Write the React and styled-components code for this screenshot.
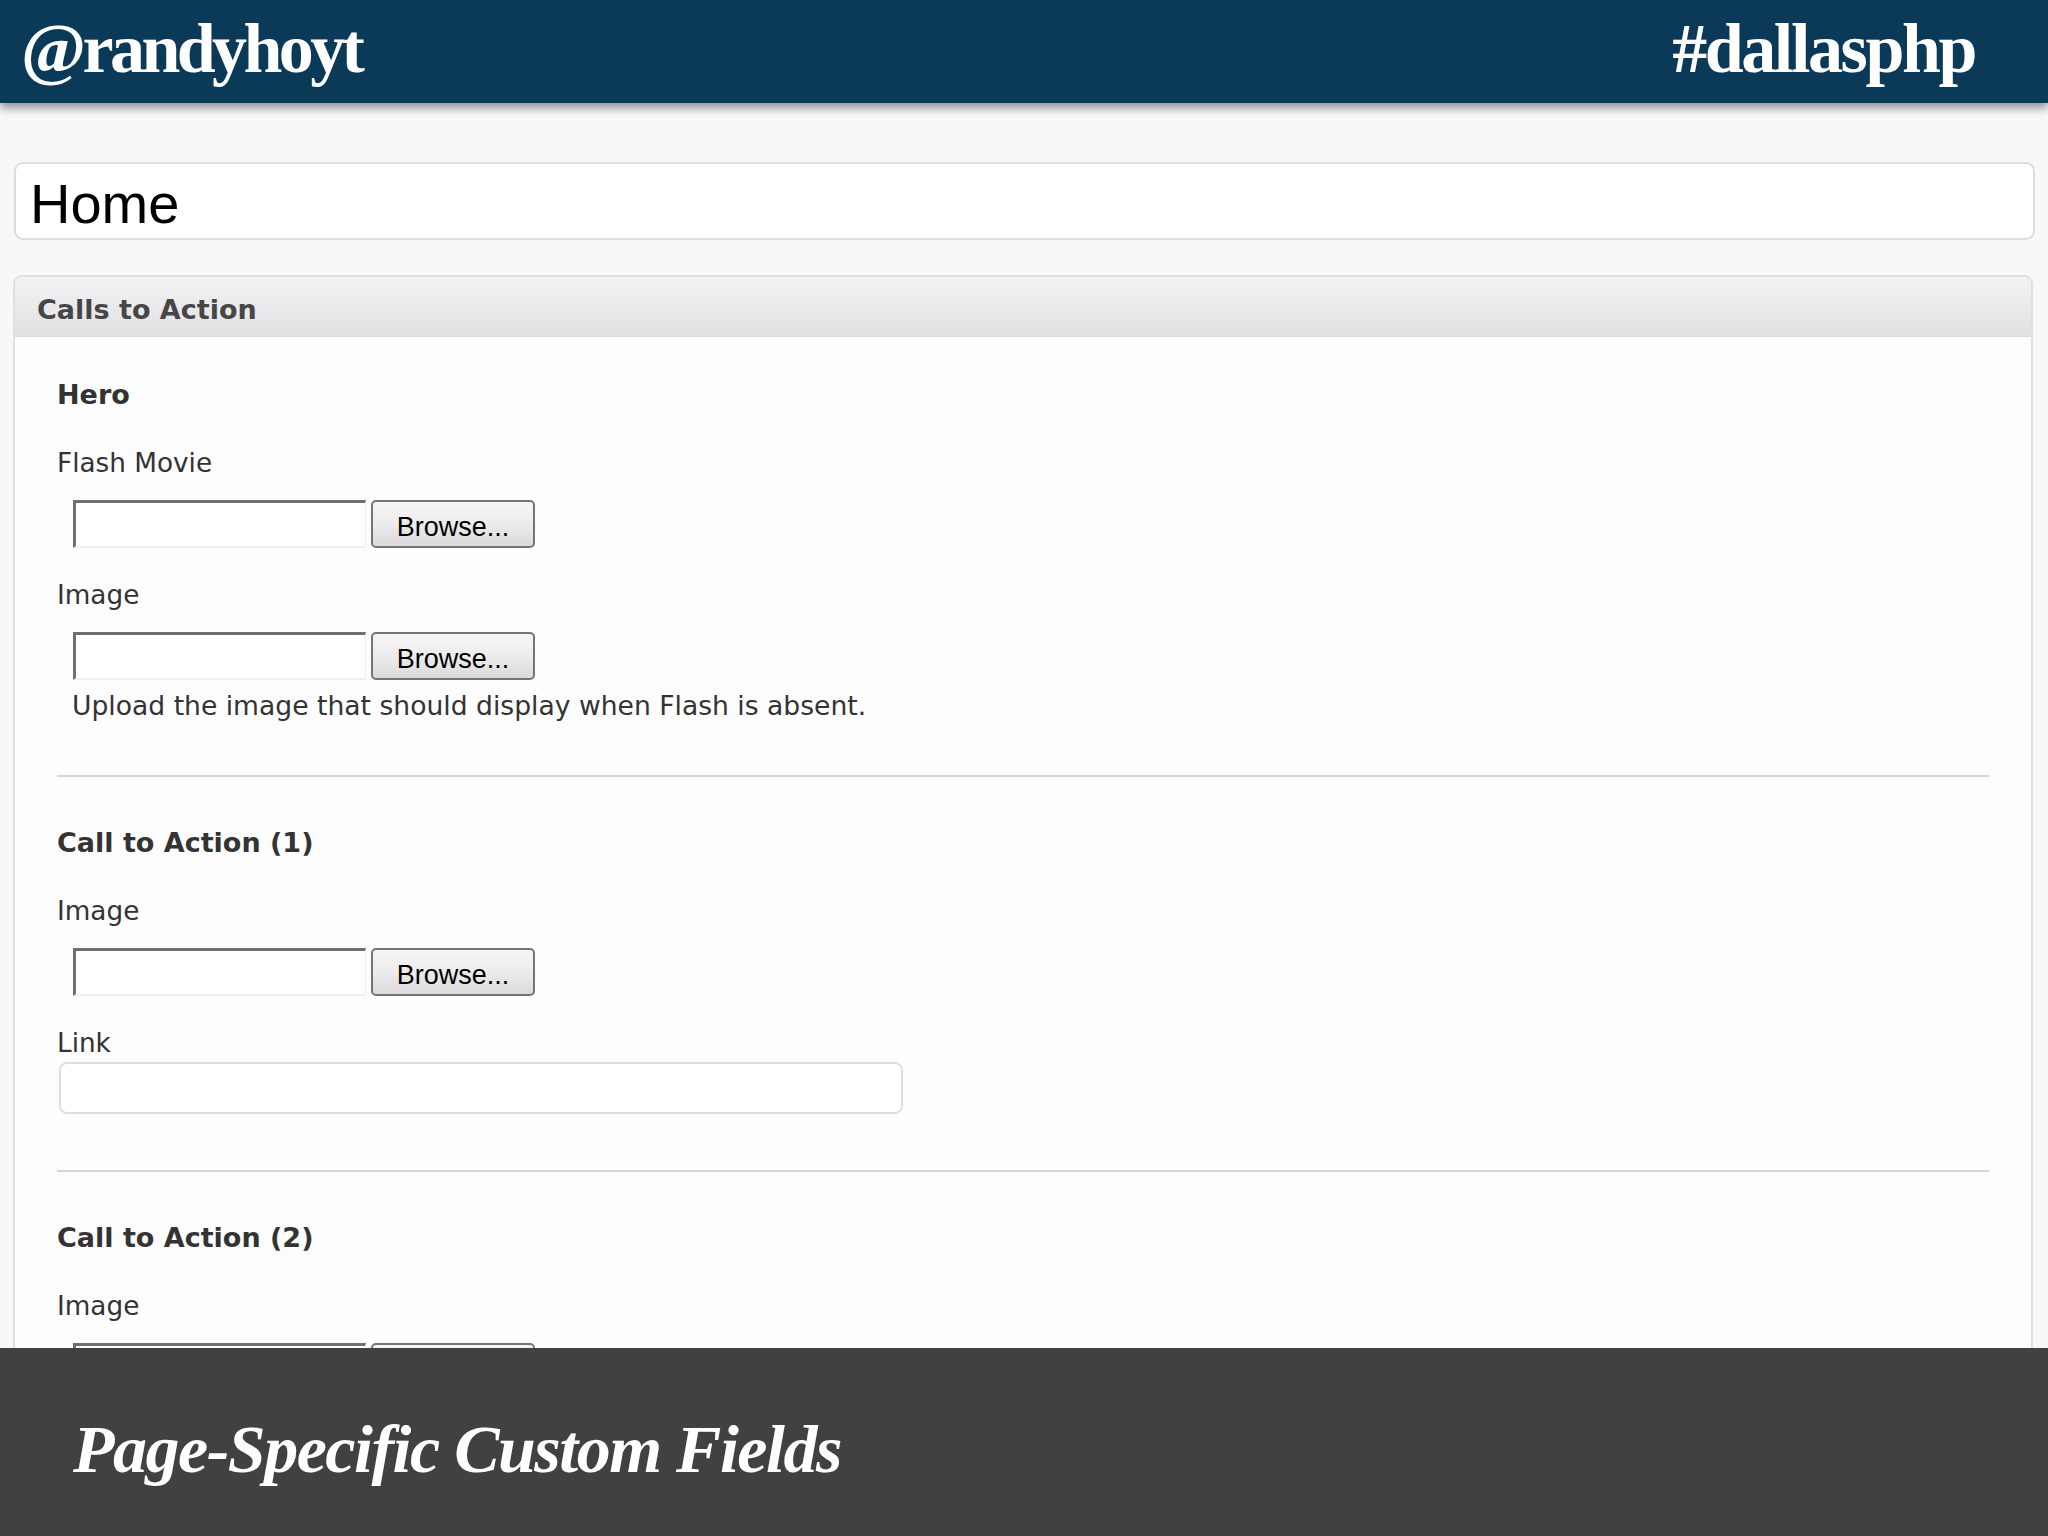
import React from "react";
import styled, { createGlobalStyle } from "styled-components";

const GlobalStyle = createGlobalStyle`
  html, body {
    margin: 0;
    padding: 0;
    background: #f8f8f9;
  }
  * { box-sizing: border-box; }
`;

const Slide = styled.div`
  width: 2048px;
  height: 1536px;
  display: flex;
  flex-direction: column;
  overflow: hidden;
  background: #f8f8f9;
`;

const TopBar = styled.header`
  position: relative;
  z-index: 2;
  flex: 0 0 103px;
  height: 103px;
  background: #0a3a57;
  display: flex;
  align-items: center;
  justify-content: space-between;
  padding: 0 73px 6px 21px;
  box-shadow: 0 5px 9px rgba(0, 0, 0, 0.42);
`;

const Handle = styled.span`
  font-family: "Liberation Serif", "Times New Roman", serif;
  font-weight: 700;
  font-size: 70px;
  letter-spacing: ${(p) => p.$spacing};
  color: #ffffff;
  line-height: 1;
`;

const Stage = styled.main`
  flex: 1 1 auto;
  overflow: hidden;
  padding: 59px 13px 0 13px;
  background: #f8f8f9;
`;

const TitleBox = styled.div`
  margin-left: 1px;
  height: 78px;
  background: #ffffff;
  border: 2px solid #dcdcde;
  border-radius: 9px;
  display: flex;
  align-items: center;
  padding: 4px 0 0 14px;
  font-family: "Liberation Sans", Arial, sans-serif;
  font-size: 56px;
  color: #000;
`;

const Panel = styled.section`
  margin: 35px 2px 0 0;
  border: 2px solid #dfdfe1;
  border-bottom: none;
  border-radius: 9px 9px 0 0;
  background: #fdfdfd;
  overflow: hidden;
`;

const PanelHeader = styled.div`
  height: 60px;
  padding: 6px 22px 0;
  display: flex;
  align-items: center;
  background: linear-gradient(#f3f3f4, #e1e0e3);
  border-bottom: 1px solid #dcdcde;
  font-family: "DejaVu Sans", Verdana, sans-serif;
  font-weight: 700;
  font-size: 27px;
  color: #464646;
`;

const PanelBody = styled.div`
  padding: 42px 42px 0;
  font-family: "DejaVu Sans", Verdana, sans-serif;
  color: #333333;
`;

const Group = styled.div`
  padding-bottom: 53px;
  border-bottom: 2px solid #d6d6d8;
  & + & {
    padding-top: 50px;
  }
`;

const GroupTitle = styled.h3`
  margin: 0 0 36px;
  font-size: 27px;
  line-height: 32px;
  font-weight: 700;
  color: #333;
`;

const Field = styled.div`
  & + & {
    margin-top: 31px;
  }
`;

const Label = styled.div`
  font-size: 26.3px;
  line-height: 32px;
  color: #333;
`;

const FileRow = styled.div`
  margin: 21px 0 0 16px;
  display: flex;
  align-items: stretch;
  height: 48px;
`;

const FileText = styled.span`
  width: 293px;
  background: #ffffff;
  border-top: 3px solid #6f6f6f;
  border-left: 3px solid #6f6f6f;
  border-right: 1px solid #efefef;
  border-bottom: 2px solid #efefef;
`;

const BrowseButton = styled.button`
  margin-left: 5px;
  width: 164px;
  height: 48px;
  border: 2px solid #747474;
  border-radius: 5px;
  background: linear-gradient(#f6f6f6 0%, #ececec 50%, #dadada 100%);
  font-family: "Liberation Sans", Arial, sans-serif;
  font-size: 27px;
  color: #000;
  padding: 7px 0 0;
`;

const Hint = styled.div`
  margin: 10px 0 0 15px;
  font-size: 26.6px;
  line-height: 32px;
  color: #333;
`;

const TextInput = styled.div`
  margin: 3px 0 3px 2px;
  width: 844px;
  height: 52px;
  background: #ffffff;
  border: 2px solid #dedee0;
  border-radius: 8px;
`;

const BottomBar = styled.footer`
  flex: 0 0 188px;
  height: 188px;
  background: #414042;
  display: flex;
  align-items: center;
  padding: 14px 0 0 73px;
`;

const Caption = styled.span`
  font-family: "Liberation Serif", "Times New Roman", serif;
  font-style: italic;
  font-weight: 700;
  font-size: 68px;
  letter-spacing: -1.5px;
  color: #ffffff;
  line-height: 1;
`;

const FileUpload = () => (
  <FileRow>
    <FileText />
    <BrowseButton type="button">Browse...</BrowseButton>
  </FileRow>
);

export default function App() {
  return (
    <>
      <GlobalStyle />
      <Slide>
        <TopBar>
          <Handle $spacing="-3.6px">@randyhoyt</Handle>
          <Handle $spacing="-2.4px">#dallasphp</Handle>
        </TopBar>
        <Stage>
          <TitleBox>Home</TitleBox>
          <Panel>
            <PanelHeader>Calls to Action</PanelHeader>
            <PanelBody>
              <Group>
                <GroupTitle>Hero</GroupTitle>
                <Field>
                  <Label>Flash Movie</Label>
                  <FileUpload />
                </Field>
                <Field>
                  <Label>Image</Label>
                  <FileUpload />
                  <Hint>Upload the image that should display when Flash is absent.</Hint>
                </Field>
              </Group>
              <Group>
                <GroupTitle>Call to Action (1)</GroupTitle>
                <Field>
                  <Label>Image</Label>
                  <FileUpload />
                </Field>
                <Field>
                  <Label>Link</Label>
                  <TextInput />
                </Field>
              </Group>
              <Group>
                <GroupTitle>Call to Action (2)</GroupTitle>
                <Field>
                  <Label>Image</Label>
                  <FileUpload />
                </Field>
              </Group>
            </PanelBody>
          </Panel>
        </Stage>
        <BottomBar>
          <Caption>Page-Specific Custom Fields</Caption>
        </BottomBar>
      </Slide>
    </>
  );
}
